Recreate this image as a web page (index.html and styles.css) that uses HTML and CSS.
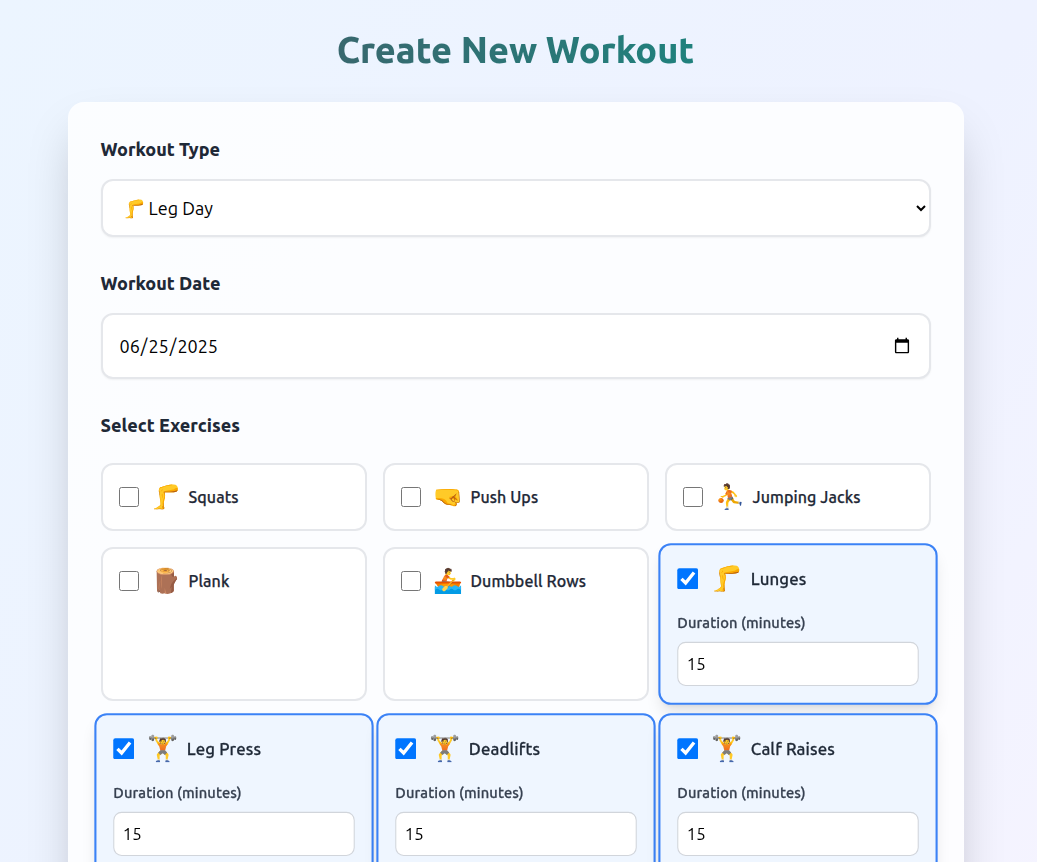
FILE: index.html
```html
<!DOCTYPE html>
<html lang="en">
<head>
<meta charset="utf-8">
<title>Create New Workout</title>
<link rel="stylesheet" href="styles.css">
</head>
<body>
<main class="page">
  <h1 class="title">Create New Workout</h1>
  <form class="panel">
    <div class="field">
      <label class="field-label" for="type">Workout Type</label>
      <select class="control type" id="type"><option>🦵 Leg Day</option></select>
    </div>
    <div class="field">
      <label class="field-label" for="date">Workout Date</label>
      <input class="control date" id="date" type="date" value="2025-06-25">
    </div>
    <div class="field">
      <span class="field-label">Select Exercises</span>
      <div class="grid">
        <div class="card"><label class="head"><input class="check" type="checkbox"><span class="emoji">🦵</span><span class="name">Squats</span></label></div>
        <div class="card"><label class="head"><input class="check" type="checkbox"><span class="emoji">🤜</span><span class="name">Push Ups</span></label></div>
        <div class="card"><label class="head"><input class="check" type="checkbox"><span class="emoji">⛹️</span><span class="name">Jumping Jacks</span></label></div>
        <div class="card"><label class="head"><input class="check" type="checkbox"><span class="emoji">🪵</span><span class="name">Plank</span></label></div>
        <div class="card"><label class="head"><input class="check" type="checkbox"><span class="emoji">🚣</span><span class="name">Dumbbell Rows</span></label></div>
        <div class="card selected"><label class="head"><input class="check" type="checkbox" checked><span class="emoji">🦵</span><span class="name">Lunges</span></label>
          <label class="duration">Duration (minutes)<input class="minutes" type="number" value="15"></label></div>
        <div class="card selected"><label class="head"><input class="check" type="checkbox" checked><span class="emoji">🏋️</span><span class="name">Leg Press</span></label>
          <label class="duration">Duration (minutes)<input class="minutes" type="number" value="15"></label></div>
        <div class="card selected"><label class="head"><input class="check" type="checkbox" checked><span class="emoji">🏋️</span><span class="name">Deadlifts</span></label>
          <label class="duration">Duration (minutes)<input class="minutes" type="number" value="15"></label></div>
        <div class="card selected"><label class="head"><input class="check" type="checkbox" checked><span class="emoji">🏋️</span><span class="name">Calf Raises</span></label>
          <label class="duration">Duration (minutes)<input class="minutes" type="number" value="15"></label></div>
      </div>
    </div>
  </form>
</main>
</body>
</html>
```
FILE: styles.css
```css
* { box-sizing: border-box; }
html { height: 100%; }
body {
  margin: 0;
  height: 100%;
  overflow: hidden;
  padding-right: 6px;
  font-family: Ubuntu, "Noto Sans", sans-serif;
  font-size: 16px;
  line-height: 24px;
  color: #1f2937;
  background: linear-gradient(to bottom right, #ecf5ff, #eef2ff, #faf5ff) 0 0 / 100% 1600px no-repeat;
}
.page { width: 896px; margin: 0 auto; padding-top: 30px; }
.title {
  margin: 0 0 32px;
  font-size: 36px;
  line-height: 40px;
  font-weight: 800;
  text-align: center;
  color: transparent;
  background: linear-gradient(to right, #4b5563, #0d9488);
  -webkit-background-clip: text;
  background-clip: text;
}
.panel {
  padding: 32px;
  border: 1px solid rgba(255, 255, 255, .2);
  border-radius: 16px;
  background: rgba(255, 255, 255, .8);
  box-shadow: 0 25px 50px -12px rgba(0, 0, 0, .25);
}
.field { margin-bottom: 32px; }
.field-label {
  display: block;
  margin-bottom: 16px;
  font-size: 18px;
  line-height: 28px;
  font-weight: 800;
}
.control {
  display: block;
  width: 100%;
  padding: 16px;
  border: 2px solid #e5e7eb;
  border-radius: 12px;
  font-family: inherit;
  font-size: 18px;
  color: #000;
  background: #fff;
  box-shadow: 0 1px 2px rgba(0, 0, 0, .05);
}
.type { height: 58px; }
.date { height: 66px; }
.grid {
  display: grid;
  grid-template-columns: repeat(3, 1fr);
  gap: 16px;
  padding-top: 8px;
}
.card {
  padding: 16px;
  border: 2px solid #e5e7eb;
  border-radius: 12px;
  background: #fff;
}
.selected {
  border-color: #3b82f6;
  background: #eff6ff;
  box-shadow: 0 10px 15px -3px rgba(0, 0, 0, .1), 0 4px 6px -4px rgba(0, 0, 0, .1);
  transform: scale(1.05);
}
.head { display: flex; align-items: center; }
.check { width: 20px; height: 20px; margin: 0 12px 0 0; }
.emoji { margin-right: 8px; font-size: 24px; line-height: 32px; }
.name {
  font-weight: 500;
  letter-spacing: .1px;
  -webkit-text-stroke: .25px currentColor;
}
.duration {
  display: block;
  margin-top: 16px;
  font-size: 14px;
  line-height: 20px;
  font-weight: 500;
  letter-spacing: .1px;
  -webkit-text-stroke: .25px currentColor;
  color: #374151;
}
.minutes {
  display: block;
  width: 100%;
  height: 42px;
  margin-top: 8px;
  padding: 8px;
  border: 1px solid #d1d5db;
  border-radius: 8px;
  font-family: inherit;
  font-size: 16px;
  -webkit-text-stroke: 0;
  color: #000;
  background: #fff;
}
```
